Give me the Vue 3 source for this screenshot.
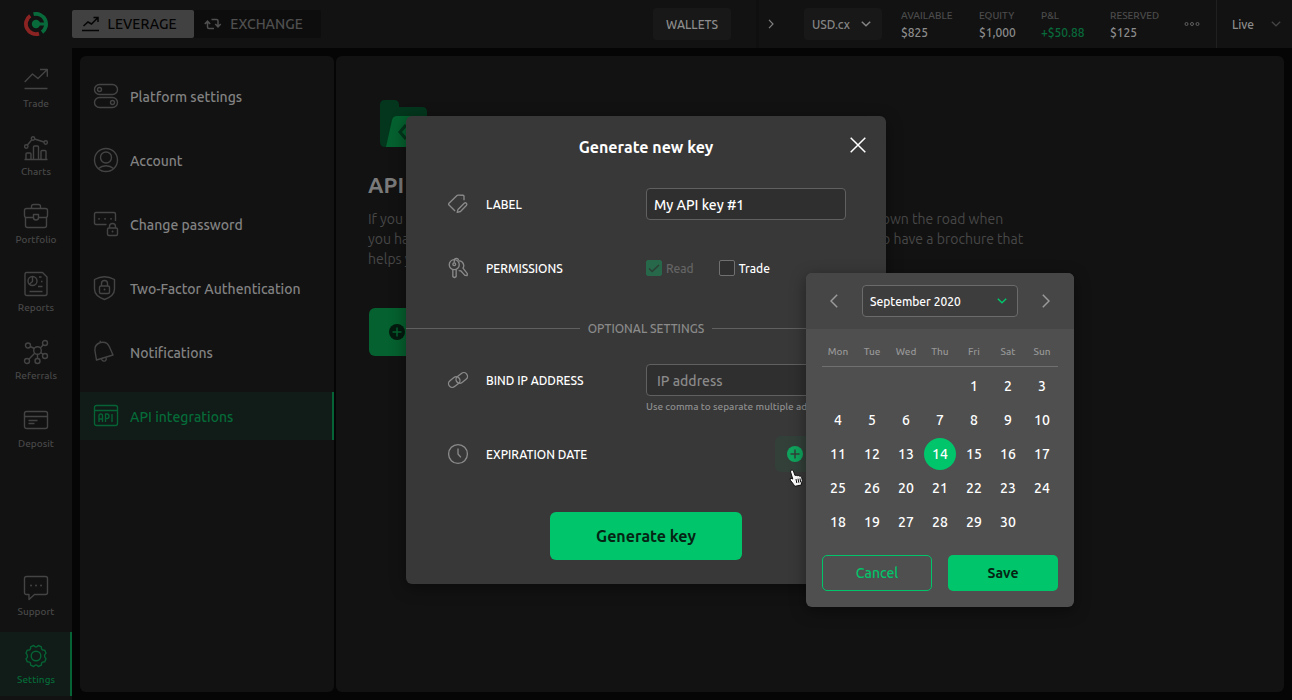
<script setup>
import { ref } from 'vue'

const navMain = [
  { name: 'Trade', icon: 'trade' },
  { name: 'Charts', icon: 'charts' },
  { name: 'Portfolio', icon: 'portfolio' },
  { name: 'Reports', icon: 'reports' },
  { name: 'Referrals', icon: 'referrals' },
  { name: 'Deposit', icon: 'deposit' },
]
const navFoot = [
  { name: 'Support', icon: 'support' },
  { name: 'Settings', icon: 'settings', active: true },
]
const sections = [
  { name: 'Platform settings', icon: 'toggles' },
  { name: 'Account', icon: 'account' },
  { name: 'Change password', icon: 'password' },
  { name: 'Two-Factor Authentication', icon: 'shield' },
  { name: 'Notifications', icon: 'bell' },
  { name: 'API integrations', icon: 'api', active: true },
]
const stats = [
  { name: 'AVAILABLE', value: '$825' },
  { name: 'EQUITY', value: '$1,000' },
  { name: 'P&L', value: '+$50.88', up: true },
  { name: 'RESERVED', value: '$125' },
]

// Inner markup of the 24x24 outline icons.
const icons = {
  trade: '<path d="M.7 14 8.500 6l5.500 4.500L23.300 1.500M16 1.500h7.300v7.300M.5 20.500h23"/>',
  charts: '<path d="M.5 23.500h23M2 23.500V18q0-1 1-1h3q1 0 1 1v5.500M9.500 23.500V11q0-1 1-1h3q1 0 1 1v12.500M17 23.500V15.500q0-1 1-1h3q1 0 1 1v8M3.200 9.200 7.800 3.800M10.500 3l9.500 3"/><circle cx="2.300" cy="10.500" r="1.700"/><circle cx="9" cy="2.500" r="1.700"/><circle cx="21.700" cy="6.500" r="1.700"/>',
  portfolio: '<path d="M7.500 4V2.500q0-2 2-2h5q2 0 2 2V4M2.500 4.500h19q2 0 2 2v5q0 2-2 2H15M9 13.500H2.500q-2 0-2-2v-5q0-2 2-2M1.500 13.500v8q0 2 2 2h17q2 0 2-2v-8M9.500 10.500h5v3q0 2.500-2.500 2.500t-2.500-2.500z"/>',
  reports: '<path d="M2.500.5h16l4.500 4.500v16.500q0 2-2 2H3q-2 0-2-2v-19q0-2 1.500-2zM5.500 19.500h13M15 5h2.500M17 9.500h1.500M14 14.500h4.500M8.500 4.500v5L5 12.500"/><circle cx="8.500" cy="9" r="4.500"/>',
  referrals: '<circle cx="13.500" cy="10.500" r="3.800"/><circle cx="4" cy="5.500" r="2.500"/><circle cx="21" cy="3" r="2.500"/><circle cx="21" cy="16" r="2.500"/><circle cx="13.500" cy="21" r="2.500"/><circle cx="3" cy="21" r="2.500"/><path d="m6.300 6.500 4 2M16.300 8l3-3.200M16.700 12.700l2.500 1.700M13.500 14.300v4M10.700 13.300 4.800 19.200"/>',
  deposit: '<rect x=".5" y="3.500" width="23" height="17" rx="2"/><path d="M.5 8.500h23M4.500 12.500h9M4.500 15.500h6"/>',
  support: '<path d="M2.500.5h19q2 0 2 2v14q0 2-2 2H10.500l-5.500 5v-5H2.500q-2 0-2-2v-14q0-2 2-2z"/><path stroke-linecap="round" stroke-width="1.800" d="M7 9.500h.1M12 9.500h.1M17 9.500h.1"/>',
  settings: '<circle cx="12" cy="12" r="4.800"/><path d="M9.700 1.500q2.300 3 4.600 0l3.100 1.300q-.5 3.800 3.300 3.300l1.300 3.100q-3 2.300 0 5.600l-1.300 3.100q-3.800-.5-3.300 3.300l-3.100 1.300q-2.300-3-4.600 0l-3.100-1.300q.5-3.800-3.300-3.300L2 14.800q3-2.300 0-5.600l1.300-3.100q3.800.5 3.300-3.300z"/>',
  toggles: '<rect x=".5" y=".5" width="23" height="10" rx="5"/><rect x=".5" y="13.500" width="23" height="10" rx="5"/><circle cx="5.500" cy="5.500" r="2"/><circle cx="18.500" cy="18.500" r="2"/>',
  account: '<circle cx="12" cy="12" r="11.500"/><circle cx="12" cy="9.500" r="5.500"/><path d="M4.500 20.500Q7.500 17.800 12 17.800t7.500 2.700"/>',
  password: '<path d="M12.500 12.500H2q-1.500 0-1.500-1.500V2Q.500.500 2 .500h18q1.500 0 1.500 1.500v7M15.500 16v-1.500q0-3 3-3t3 3V16"/><rect x="13.500" y="16" width="10" height="7.500" rx="1.500"/><path stroke-linecap="round" stroke-width="1.800" d="M5 6.800h.1M11 6.800h.1M17 6.800h.1M18.500 19.500h.1"/>',
  shield: '<path d="M.5 3.500Q10.500-2 20.500 3.500V13q0 7-10 10.500Q.5 20 .5 13zM7.500 10V7.500q0-3 3-3t3 3V10"/><rect x="5.500" y="10" width="10" height="7.500" rx="1.500"/><path stroke-linecap="round" stroke-width="1.800" d="M10.500 13.500h.1"/>',
  bell: '<path d="M2.500 20 .9 10.500Q.3 4.500 6.500 2.500q6.500-1.500 9 4.500l3.500 8zM6.500 2.500 6 .8M7.500 19q1.200 3 3.700 1.800 1.500-.8 1-2.800"/>',
  api: '<rect x=".5" y="1.500" width="23" height="20" rx="2"/><path d="M.5 6.500h23M5 18v-6q0-2 1.800-2t1.700 2v6M5 15h3.500M11.500 18v-8h1.700q1.800 0 1.800 2.200t-1.800 2.300h-1.700M18 10v8"/>',
  tag: '<path d="m8.500 20.500-7.300-7.300q-1-1 0-2L10.500 2q.6-.6 1.500-.6l6 .1q1.200 0 1.200 1.200V7.500M15.800 5h.2M11 22l1-3.500 7.500-7.500q1.300-1 2.500 0t.3 2.500L15 21z"/>',
  keys: '<circle cx="7.500" cy="8" r="6"/><circle cx="7.500" cy="7.500" r="1.700"/><path d="M5.800 13.800v8.500l2 1.200 2-1.200v-8.500M7.500 5.800V3q0-2.500 2.500-2.500T12.500 3M13 3.300q5 .2 6 5.700-.2 2-1 3.200l5.200 6.500-.2 2.300-2.700-.2-5-5.500q-1.500.2-2.500-.3"/>',
  link: '<rect x="-7.500" y="-4.500" width="15" height="9" rx="4.500" transform="translate(7.500 14.500) rotate(-38)"/><rect x="-7.500" y="-4.500" width="15" height="9" rx="4.500" transform="translate(16.500 9.500) rotate(-38)"/>',
  clock: '<circle cx="12" cy="12" r="11.300"/><path d="M12 5.500v6.500l3.500 4"/>',
}

const weekdays = ['Mon', 'Tue', 'Wed', 'Thu', 'Fri', 'Sat', 'Sun']
const weeks = [
  [null, null, null, null, 1, 2, 3],
  [4, 5, 6, 7, 8, 9, 10],
  [11, 12, 13, 14, 15, 16, 17],
  [25, 26, 20, 21, 22, 23, 24],
  [18, 19, 27, 28, 29, 30, null],
]

const label = ref('My API key #1')
const ip = ref('')
const canTrade = ref(false)
const selected = ref(14)
</script>

<template>
  <div class="app">
    <header class="topbar">
      <a class="logo" href="#" aria-label="Home">
        <svg width="24" height="24" viewBox="0 0 24 24" fill="none" stroke-width="3.800">
          <path d="M9.500 2.200a10.100 10.100 0 0 1 8.500 17.900" stroke="#086a3b" />
          <path d="M6.200 3.700a10.100 10.100 0 0 0 8.800 17.900" stroke="#8c2323" />
          <circle cx="12" cy="12" r="4.200" fill="#086a3b" />
          <path d="M12 12h11" stroke="#086a3b" stroke-width="3" />
        </svg>
      </a>
      <div class="modes">
        <button class="mode on">
          <svg width="18" height="16" viewBox="0 0 18 16" fill="none" stroke="currentColor" stroke-width="1.500"><path d="m1.500 10 4.500-4 3.500 2 6-6M11.500 1.500h4.500V6M0 14.500h17" /></svg>
          LEVERAGE
        </button>
        <button class="mode">
          <svg width="18" height="16" viewBox="0 0 18 16" fill="none" stroke="currentColor" stroke-width="1.500"><path d="M3.500 5.500V11q0 1.500 1.500 1.500h5M.8 8l2.700-2.800L6.200 8M14 10.500V5q0-1.500-1.500-1.500h-5M11.300 8l2.700 2.800L16.700 8" /></svg>
          EXCHANGE
        </button>
      </div>
      <button class="wallets">WALLETS</button>
      <div class="account">
        <button class="step" aria-label="Next wallet">
          <svg width="6" height="10" viewBox="0 0 6 10" fill="none" stroke="currentColor" stroke-width="1.200"><path d="m1 .8 4 4.200-4 4.200" /></svg>
        </button>
        <span class="pick currency">
          <select aria-label="Wallet"><option>USD.cx</option></select>
          <svg width="10" height="6" viewBox="0 0 10 6" fill="none" stroke="currentColor" stroke-width="1.500"><path d="m.8.8 4.200 4 4.200-4" /></svg>
        </span>
        <dl class="stats">
          <div v-for="s in stats" :key="s.name">
            <dt>{{ s.name }}</dt>
            <dd :class="{ up: s.up }">{{ s.value }}</dd>
          </div>
        </dl>
        <button class="more" aria-label="More">
          <svg width="16" height="6" viewBox="0 0 16 6" fill="none" stroke="currentColor"><circle cx="2.500" cy="3" r="1.500" /><circle cx="8" cy="3" r="1.500" /><circle cx="13.500" cy="3" r="1.500" /></svg>
        </button>
      </div>
      <span class="pick live">
        <select aria-label="Environment"><option>Live</option></select>
        <svg width="10" height="6" viewBox="0 0 10 6" fill="none" stroke="currentColor" stroke-width="1.200"><path d="m.8.8 4.200 4 4.200-4" /></svg>
      </span>
    </header>

    <div class="body">
      <nav class="rail" aria-label="Main">
        <a v-for="n in navMain" :key="n.name" href="#" class="rail-item">
          <svg width="24" height="24" viewBox="0 0 24 24" class="line" v-html="icons[n.icon]" />
          {{ n.name }}
        </a>
        <span class="spring"></span>
        <a v-for="n in navFoot" :key="n.name" href="#" class="rail-item" :class="{ active: n.active }">
          <svg width="24" height="24" viewBox="0 0 24 24" class="line" v-html="icons[n.icon]" />
          {{ n.name }}
        </a>
      </nav>

      <nav class="sections" aria-label="Settings">
        <a v-for="s in sections" :key="s.name" href="#" class="section" :class="{ active: s.active }">
          <svg width="24" height="24" viewBox="0 0 24 24" class="line" v-html="icons[s.icon]" />
          <span>{{ s.name }}</span>
        </a>
      </nav>

      <main class="content">
        <svg class="folder" width="48" height="48" viewBox="0 0 48 48">
          <path fill="#03361c" d="M5 0h9q5 0 5 5v2h23q5 0 5 5v30q0 5-5 5H5q-5 0-5-5V5q0-5 5-5z" />
          <path fill="#05612f" d="M17 16h31v31H6l6-27q1-4 5-4z" />
          <path fill="none" stroke="#03361c" stroke-width="3" d="m26 25-6 7 6 7" />
        </svg>
        <h1>API integrations</h1>
        <p>
          If you are looking for a way to make the most of your account when trading later down the road when<br />
          you have more than one strategy running at the same time, it is often very useful to have a brochure that<br />
          helps you.
        </p>
        <button class="create" aria-label="Generate new key">
          <svg width="16" height="16" viewBox="0 0 16 16"><circle cx="8" cy="8" r="8" fill="#041a0f" /><path d="M8 3.500v9M3.500 8h9" stroke="#05612f" stroke-width="1.500" /></svg>
        </button>
      </main>
    </div>

    <div class="overlay">
      <section class="dialog" role="dialog" aria-labelledby="dialog-title">
        <h2 id="dialog-title">Generate new key</h2>
        <button class="close" aria-label="Close">
          <svg width="16" height="16" viewBox="0 0 16 16" fill="none" stroke="currentColor" stroke-width="1.500"><path d="m.7.7 14.600 14.600M15.300.7.7 15.300" /></svg>
        </button>

        <div class="row">
          <svg width="20" height="20" viewBox="0 0 24 24" class="line soft" v-html="icons.tag" />
          <label for="key-label">LABEL</label>
          <input id="key-label" v-model="label" class="field" type="text" />
        </div>

        <div class="row">
          <svg width="20" height="20" viewBox="0 0 24 24" class="line soft" v-html="icons.keys" />
          <span class="caption">PERMISSIONS</span>
          <div class="checks">
            <label class="check off"><input type="checkbox" checked disabled /><svg width="12" height="9" viewBox="0 0 12 9" fill="none" stroke="#2b3f35" stroke-width="1.600"><path d="m1 4.500 3.200 3L11 1" /></svg>Read</label>
            <label class="check"><input v-model="canTrade" type="checkbox" />Trade</label>
          </div>
        </div>

        <div class="divider"><span>OPTIONAL SETTINGS</span></div>

        <div class="row">
          <svg width="20" height="20" viewBox="0 0 24 24" class="line soft" v-html="icons.link" />
          <label for="key-ip">BIND IP ADDRESS</label>
          <input id="key-ip" v-model="ip" class="field ip" type="text" placeholder="IP address" />
        </div>
        <p class="hint">Use comma to separate multiple addresses</p>

        <div class="row expiry">
          <svg width="20" height="20" viewBox="0 0 24 24" class="line soft" v-html="icons.clock" />
          <span class="caption">EXPIRATION DATE</span>
          <button class="add" aria-label="Add expiration date">
            <svg width="16" height="16" viewBox="0 0 16 16"><circle cx="8" cy="8" r="8" fill="#0fa45d" /><path d="M8 3.500v9M3.500 8h9" stroke="#33403a" stroke-width="1.500" /></svg>
          </button>
          <svg class="pointer" width="16" height="18" viewBox="0 0 16 18"><path fill="#fff" stroke="#111" d="M2.200 1.200q1.500-.8 2.200.8L6 6.500q1-1 2.200.2 1.200-.8 2 .4 1.200-.6 1.900.5l.7 1.200q1.300 3-.2 5l-.4 2.300-6.400 1.200-1.300-2-3.200-4.200q-.8-1.700.7-1.900l1.800.9L1.600 3q-.2-1.300.6-1.800z" /><path stroke="#111" d="m7 10 .8 4M9 9.700l.8 4M11 9.500l.7 3.800" /></svg>
        </div>

        <button class="submit">Generate key</button>

        <div class="calendar" role="group" aria-label="Expiration date">
          <div class="cal-head">
            <button aria-label="Previous month"><svg width="8" height="14" viewBox="0 0 8 14" fill="none" stroke="currentColor" stroke-width="1.500"><path d="M7.200.7 1 7l6.200 6.300" /></svg></button>
            <span class="pick month">
              <select aria-label="Month"><option>September 2020</option></select>
              <svg width="10" height="6" viewBox="0 0 10 6" fill="none" stroke="#00c56a" stroke-width="1.500"><path d="m.8.8 4.200 4 4.200-4" /></svg>
            </span>
            <button aria-label="Next month"><svg width="8" height="14" viewBox="0 0 8 14" fill="none" stroke="currentColor" stroke-width="1.500"><path d="M.8.7 7 7 .8 13.300" /></svg></button>
          </div>
          <div class="cal-body">
            <table>
              <thead>
                <tr><th v-for="d in weekdays" :key="d" scope="col">{{ d }}</th></tr>
              </thead>
              <tbody>
                <tr v-for="(week, w) in weeks" :key="w">
                  <td v-for="(day, i) in week" :key="i">
                    <button v-if="day" :class="{ picked: day === selected }" @click="selected = day">{{ day }}</button>
                  </td>
                </tr>
              </tbody>
            </table>
            <div class="cal-actions">
              <button class="cancel">Cancel</button>
              <button class="save">Save</button>
            </div>
          </div>
        </div>
      </section>
    </div>
  </div>
</template>

<style>
body {
  background: #050505;
}
</style>

<style scoped>
* {
  box-sizing: border-box;
}
.app {
  position: relative;
  display: flex;
  flex-direction: column;
  min-height: 100vh;
  background: #050505;
  color: #828282;
  font-family: Ubuntu, "Noto Sans", "Open Sans", sans-serif;
  font-size: 14px;
  font-weight: 500;
}
button,
input,
select {
  margin: 0;
  padding: 0;
  border: 0;
  background: none;
  color: inherit;
  font: inherit;
}
button {
  display: flex;
  align-items: center;
  justify-content: center;
}
a {
  color: inherit;
  text-decoration: none;
}
svg {
  display: block;
  flex: none;
}
.line {
  overflow: visible;
  fill: none;
  stroke: #444;
  stroke-width: 1.4;
  stroke-linejoin: round;
}
.soft {
  stroke: #8a8a8a;
  stroke-width: 1.6;
}

/* Top bar */
.topbar {
  display: flex;
  align-items: center;
  height: 48px;
  background: #121212;
}
.logo {
  display: flex;
  justify-content: center;
  width: 72px;
}
.modes {
  display: flex;
  height: 28px;
  border-radius: 2px;
  background: #0d0d0d;
}
.mode {
  gap: 8px;
  width: 127px;
  padding-right: 8px;
  color: #505050;
}
.mode.on {
  width: 122px;
  border-radius: 2px;
  background: #414141;
  color: #050505;
}
.wallets {
  width: 78px;
  height: 32px;
  margin-left: auto;
  border-radius: 4px;
  background: #181818;
  color: #8c8c8c;
  font-size: 12px;
}
.account {
  display: flex;
  align-items: center;
  height: 48px;
  margin-left: 25px;
  border-left: 3px solid #0f0f0f;
}
.step {
  width: 24px;
  height: 32px;
  color: #7f7f7f;
}
.pick {
  position: relative;
  display: flex;
  align-items: center;
}
.pick select {
  width: 100%;
  height: 100%;
  appearance: none;
}
.pick svg {
  position: absolute;
  right: 11px;
  pointer-events: none;
}
.currency {
  width: 78px;
  height: 32px;
  margin-left: 21px;
  border-radius: 4px;
  background: #181818;
  color: #858585;
  font-size: 12px;
}
.currency select {
  padding-left: 8px;
}
.stats {
  display: grid;
  grid-template-columns: 78px 62px 69px 74px;
  margin: 0 0 0 19px;
  padding-top: 3px;
}
.stats dt {
  color: #4c4c4c;
  font-size: 10px;
  line-height: 14px;
}
.stats dd {
  margin: 0;
  color: #8c8c8c;
  font-size: 12px;
  line-height: 20px;
}
.stats .up {
  color: #086a3b;
}
.more {
  width: 16px;
  height: 32px;
  color: #606060;
}
.live {
  width: 76px;
  height: 48px;
  margin-left: 16px;
  border-left: 1px solid #202020;
  color: #8c8c8c;
  font-size: 12px;
}
.live select {
  padding-left: 15px;
}
.live svg {
  color: #454545;
}

/* Page columns */
.body {
  display: flex;
  flex: 1;
}
.rail {
  display: flex;
  flex-direction: column;
  gap: 4px;
  width: 72px;
  padding: 8px 0 4px;
  background: #121212;
}
.spring {
  flex: 1;
}
.rail-item {
  display: flex;
  flex-direction: column;
  align-items: center;
  gap: 4px;
  height: 64px;
  padding-top: 12px;
  color: #484848;
  font-size: 10px;
  line-height: 16px;
}
.rail-item.active {
  background: #111b17;
  box-shadow: inset -2px 0 #056335;
  color: #056b39;
}
.active .line {
  stroke: #056335;
}
.sections {
  display: flex;
  flex-direction: column;
  gap: 16px;
  width: 254px;
  margin: 8px 0 8px 8px;
  padding-top: 16px;
  border-radius: 6px;
  background: #121212;
}
.section {
  display: flex;
  align-items: center;
  gap: 12px;
  height: 48px;
  padding-left: 14px;
}
.section span {
  padding-top: 2px;
}
.section.active {
  border-right: 2px solid #056335;
  background: #111b17;
  color: #056b39;
}
.content {
  flex: 1;
  margin: 8px 8px 8px 2px;
  padding: 44px 32px 32px;
  border-radius: 6px;
  background: #121212;
}
.folder {
  margin-left: 12px;
}
h1 {
  margin: 23px 0 10px;
  color: #7a7a7a;
  font-size: 22px;
  font-weight: 700;
  line-height: 28px;
}
.content p {
  margin: 0;
  color: #484848;
  font-size: 14px;
  font-weight: 400;
  line-height: 20px;
  white-space: nowrap;
}
.create {
  width: 192px;
  height: 48px;
  margin: 39px 0 0 1px;
  padding-left: 20px;
  border-radius: 6px;
  background: #05612f;
  justify-content: flex-start;
}

/* Dialog */
.overlay {
  position: absolute;
  inset: 0;
  display: flex;
  align-items: center;
  justify-content: center;
}
.dialog {
  position: relative;
  width: 480px;
  padding: 15px 0 24px;
  border-radius: 6px;
  background: #383838;
  box-shadow: 0 4px 16px rgba(0, 0, 0, 0.4);
  color: #fff;
}
h2 {
  margin: 0 0 25px;
  font-size: 16px;
  font-weight: 700;
  line-height: 32px;
  text-align: center;
}
.close {
  position: absolute;
  top: 16px;
  right: 15px;
  width: 26px;
  height: 26px;
}
.row {
  position: relative;
  display: grid;
  grid-template-columns: 38px 160px 200px;
  align-items: center;
  height: 32px;
  margin: 0 40px 32px 42px;
  font-size: 12px;
}
.field {
  width: 100%;
  height: 32px;
  padding: 1px 7px 0;
  border: 1px solid #606060;
  border-radius: 4px;
  background: #2f2f2f;
  font-size: 14px;
}
.field.ip {
  padding: 1px 10px 0;
}
.field::placeholder {
  color: #8a8a8a;
  opacity: 1;
}
.checks {
  display: flex;
  gap: 25px;
}
.check {
  position: relative;
  display: flex;
  align-items: center;
  gap: 4px;
}
.check input {
  width: 16px;
  height: 16px;
  border: 1px solid #707070;
  border-radius: 2px;
  background: #303030;
  appearance: none;
}
.check input:checked {
  border-color: #27684a;
  background: #27684a;
}
.check svg {
  position: absolute;
  left: 2px;
}
.off {
  color: #646464;
}
.divider {
  display: flex;
  align-items: center;
  gap: 8px;
  height: 24px;
  margin-bottom: 24px;
  color: #8a8a8a;
  font-size: 12px;
}
.divider::before,
.divider::after {
  flex: 1;
  height: 1px;
  background: #606060;
  content: "";
}
.divider + .row {
  margin-bottom: 5px;
}
.hint {
  margin: 0 0 23px 240px;
  color: #8f8f8f;
  font-size: 10px;
  line-height: 12px;
}
.expiry {
  margin-bottom: 44px;
}
.add {
  width: 71px;
  height: 36px;
  padding-left: 12px;
  border-radius: 6px;
  background: #33403a;
  justify-content: flex-start;
  justify-self: end;
}
.pointer {
  position: absolute;
  top: 33px;
  left: 341px;
}
.submit {
  width: 192px;
  height: 48px;
  margin: 0 auto;
  border-radius: 6px;
  background: #00c56a;
  color: #062414;
  font-size: 16px;
  font-weight: 700;
}

/* Date picker */
.calendar {
  position: absolute;
  top: 157px;
  left: 400px;
  width: 268px;
  overflow: hidden;
  border-radius: 6px;
  background: #4f4f4f;
  box-shadow: 0 4px 16px rgba(0, 0, 0, 0.4);
}
.cal-head {
  display: flex;
  align-items: center;
  justify-content: space-between;
  height: 56px;
  padding: 0 16px;
  background: #464646;
  color: #9a9a9a;
}
.cal-head button {
  width: 24px;
  height: 32px;
}
.month {
  width: 156px;
  height: 32px;
  color: #fff;
  font-size: 12px;
}
.month select {
  padding-left: 7px;
  border: 1px solid #6b6b6b;
  border-radius: 4px;
  background: #3d3d3d;
}
.cal-body {
  padding: 8px 16px 16px;
}
table,
thead,
tbody {
  display: block;
}
tr {
  display: grid;
  grid-template-columns: repeat(7, 1fr);
  gap: 2px;
  margin-bottom: 2px;
}
th,
td {
  padding: 0;
}
thead tr {
  margin-bottom: 3px;
  border-bottom: 1px solid #707070;
}
th {
  color: #979797;
  font-size: 10px;
  font-weight: 500;
  line-height: 29px;
}
td,
td button {
  width: 32px;
  height: 32px;
}
td button {
  border-radius: 50%;
  font-size: 14px;
}
.picked {
  background: #00c56a;
}
.cal-actions {
  display: grid;
  grid-template-columns: 1fr 1fr;
  gap: 16px;
  margin-top: 17px;
}
.cal-actions button {
  height: 36px;
  border-radius: 5px;
}
.cancel {
  border: 1px solid #00c56a;
  color: #00c56a;
}
.save {
  background: #00c56a;
  color: #062414;
  font-weight: 700;
}
</style>
